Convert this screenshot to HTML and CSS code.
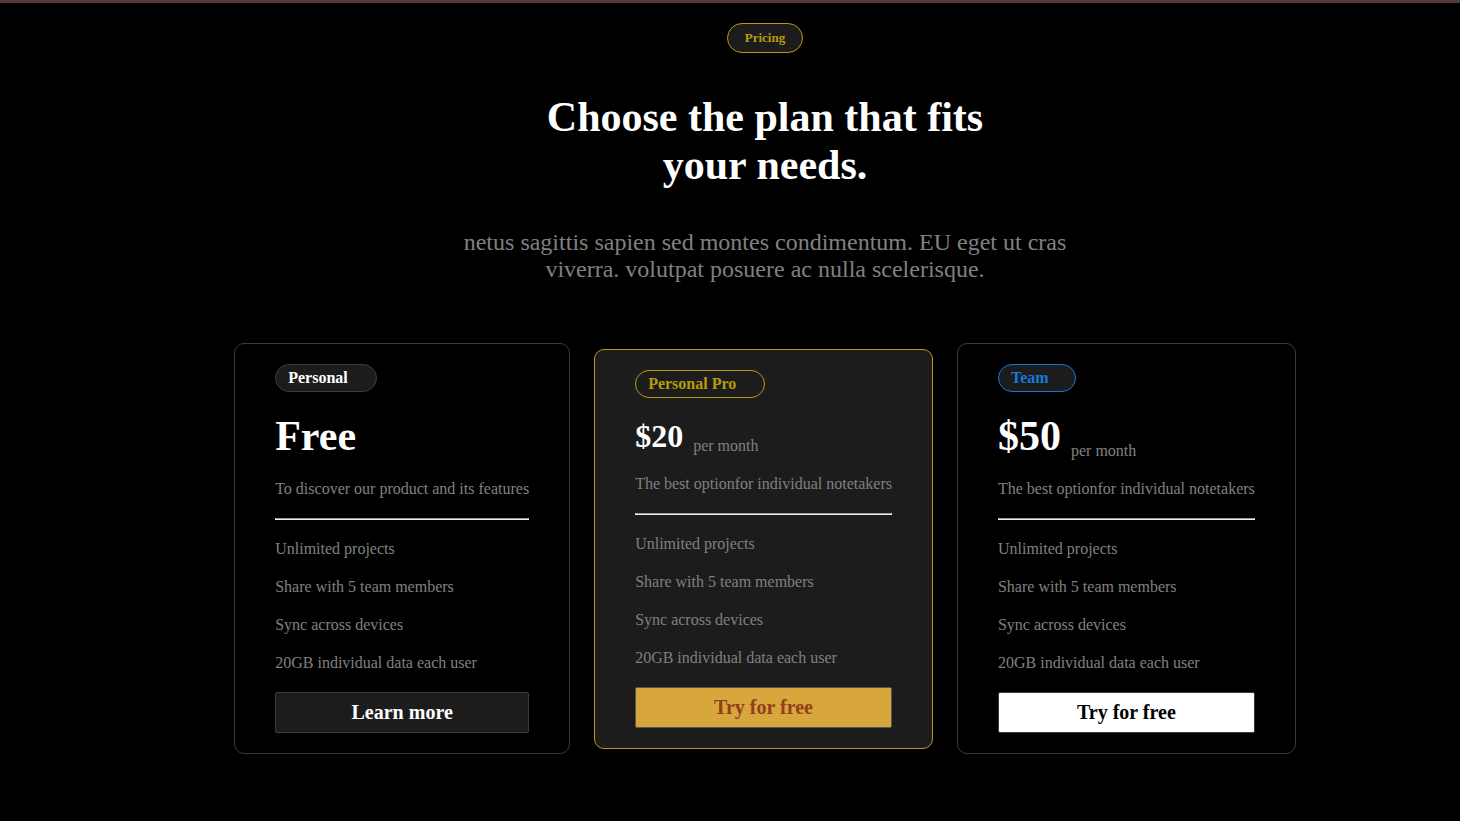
FILE: index.html
```html
<!DOCTYPE html>
<html lang="en">
<head>
<meta charset="utf-8">
<title>Pricing</title>
<link rel="stylesheet" href="styles.css">
</head>
<body>
<main class="pricing">
  <header class="intro">
    <p class="badge">Pricing</p>
    <h1 class="title">Choose the plan that fits your needs.</h1>
    <p class="lead">netus sagittis sapien sed montes condimentum. EU eget ut cras viverra. volutpat posuere ac nulla scelerisque.</p>
  </header>
  <section class="plans">
    <article class="plan">
      <h2 class="tag">Personal</h2>
      <p class="price"><strong class="amount">Free</strong></p>
      <p class="summary">To discover our product and its features</p>
      <hr class="rule">
      <ul class="features">
        <li>Unlimited projects</li>
        <li>Share with 5 team members</li>
        <li>Sync across devices</li>
        <li>20GB individual data each user</li>
      </ul>
      <button class="action" type="button">Learn more</button>
    </article>
    <article class="plan plan-pro">
      <h2 class="tag">Personal Pro</h2>
      <p class="price"><strong class="amount">$20</strong><span class="period">per month</span></p>
      <p class="summary">The best optionfor individual notetakers</p>
      <hr class="rule">
      <ul class="features">
        <li>Unlimited projects</li>
        <li>Share with 5 team members</li>
        <li>Sync across devices</li>
        <li>20GB individual data each user</li>
      </ul>
      <button class="action" type="button">Try for free</button>
    </article>
    <article class="plan plan-team">
      <h2 class="tag">Team</h2>
      <p class="price"><strong class="amount">$50</strong><span class="period">per month</span></p>
      <p class="summary">The best optionfor individual notetakers</p>
      <hr class="rule">
      <ul class="features">
        <li>Unlimited projects</li>
        <li>Share with 5 team members</li>
        <li>Sync across devices</li>
        <li>20GB individual data each user</li>
      </ul>
      <button class="action" type="button">Try for free</button>
    </article>
  </section>
</main>
</body>
</html>
```

FILE: styles.css
```css
* {
  box-sizing: border-box;
}

body {
  margin: 0;
  background: #000;
  color: #808080;
  font: 16px/18px "Liberation Serif", "Times New Roman", serif;
}

h1, h2, p, ul {
  margin: 0;
  padding: 0;
}

.pricing {
  display: flex;
  flex-direction: column;
  align-items: center;
  gap: 60px;
  padding: 20px 0 60px 70px;
  border-top: 3px solid #573737;
}

.intro {
  display: flex;
  flex-direction: column;
  align-items: center;
  gap: 40px;
  text-align: center;
}

.badge {
  padding: 6px 17px;
  border: 1px solid #b89b0b;
  border-radius: 16px;
  background: #1c1c1c;
  color: #b89b0b;
  font-size: 13px;
  line-height: 16px;
  font-weight: bold;
}

.title {
  max-width: 480px;
  color: #fff;
  font-size: 42px;
  line-height: 48px;
}

.lead {
  max-width: 640px;
  font-size: 24px;
  line-height: 27px;
}

.plans {
  display: flex;
  align-items: center;
  gap: 24px;
}

.plan {
  display: flex;
  flex-direction: column;
  align-items: stretch;
  gap: 20px;
  padding: 20px 40px;
  border: 1px solid #3c3c3c;
  border-radius: 10px;
}

.tag {
  align-self: flex-start;
  padding: 4px 28px 4px 12px;
  border: 1px solid #3c3c3c;
  border-radius: 14px;
  background: #1c1c1c;
  color: #fff;
  font-size: 16px;
  line-height: 18px;
}

.price {
  display: flex;
  align-items: flex-end;
  gap: 10px;
}

.amount {
  color: #fff;
  font-size: 42px;
  line-height: 48px;
}

.rule {
  width: 100%;
  margin: 0;
  border: 1px solid #eee;
  border-top-color: #9a9a9a;
}

.features {
  display: flex;
  flex-direction: column;
  gap: 20px;
  list-style: none;
}

.action {
  padding: 8px 6px;
  border: 1px solid #3c3c3c;
  border-radius: 2px;
  background: #1c1c1c;
  color: #fff;
  font: bold 20px/23px "Liberation Serif", "Times New Roman", serif;
}

.plan-pro {
  border-color: #b89b0b;
  background: #1c1c1c;
}

.plan-pro .tag {
  border-color: #b89b0b;
  color: #b89b0b;
}

.plan-pro .amount {
  font-size: 32px;
  line-height: 37px;
}

.plan-pro .action {
  border-color: #555;
  background: #d7a63d;
  color: #923f18;
}

.plan-team .tag {
  padding-right: 26px;
  border-color: #1479d8;
  color: #1479d8;
}

.plan-team .action {
  background: #fff;
  color: #000;
}
```
